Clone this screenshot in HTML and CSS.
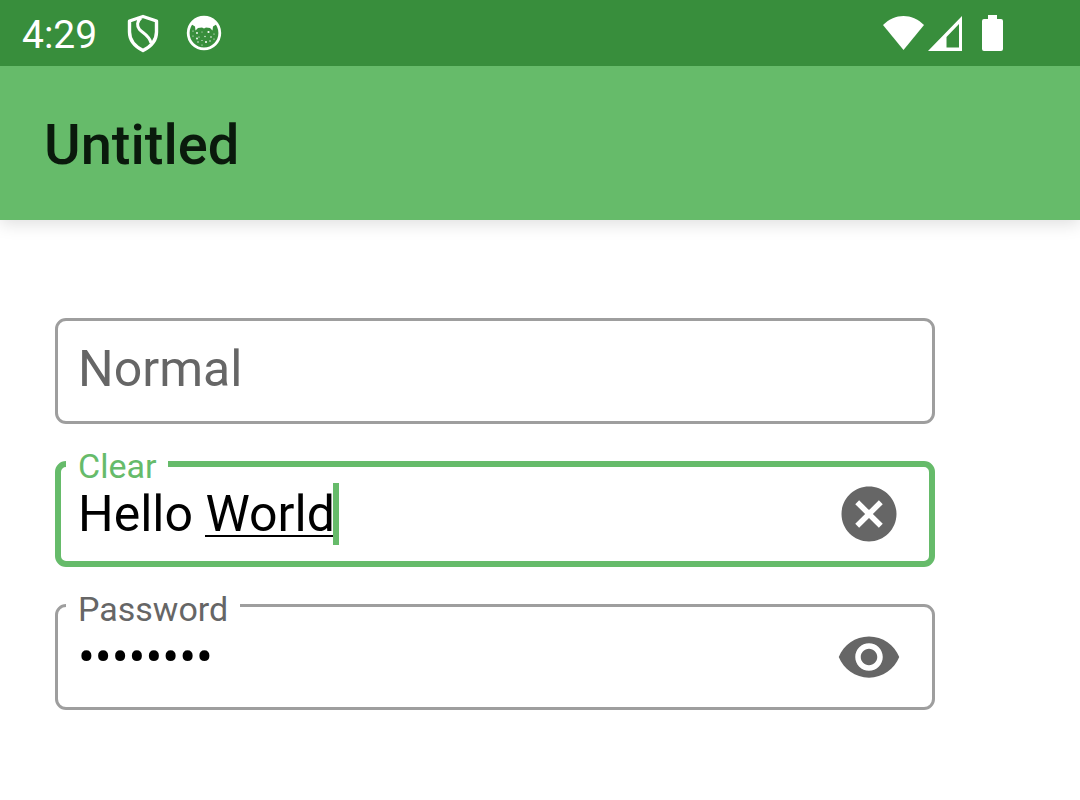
FILE: index.html
```html
<!DOCTYPE html>
<html lang="en">
<head>
  <meta charset="utf-8">
  <meta name="viewport" content="width=device-width, initial-scale=1">
  <title>Untitled</title>
  <link rel="stylesheet" href="styles.css">
</head>
<body>
  <div class="status-bar">
    <span class="time">4:29</span>
    <svg class="shield" width="34" height="40" viewBox="0 0 34 40" fill="none" stroke="#fff" stroke-linejoin="round">
      <path stroke-width="3.400" d="M17 3.500L30.500 8V19C30.500 27 25 33.500 17 37.500C9 33.500 3.500 27 3.500 19V8Z"/>
      <path stroke-width="3" d="M15 5C11 8 10.500 13 13.500 16.500C17 20.500 23 22 25 30"/>
    </svg>
    <svg class="cat" width="36" height="36" viewBox="0 0 36 36">
      <circle cx="18" cy="18" r="15.800" fill="none" stroke="#fff" stroke-width="2.800"/>
      <path fill="#fff" d="M5 9C12 0 24 0 31 9L27 11.500L26.500 15.500L24 13L20 12.500L18 13.500L16 12.500L12 13L9.500 15.500L9 11.500Z"/>
      <g fill="#fff">
        <circle cx="7" cy="16" r=".6"/><circle cx="11" cy="18" r=".9"/><circle cx="16" cy="17" r=".5"/>
        <circle cx="22.500" cy="17" r="1.100"/><circle cx="28" cy="19" r=".6"/><circle cx="7" cy="21" r=".6"/>
        <circle cx="13" cy="22" r=".6"/><circle cx="11" cy="23.500" r=".9"/><circle cx="19" cy="21.500" r=".7"/>
        <circle cx="25" cy="22" r=".8"/><circle cx="12" cy="27" r=".7"/><circle cx="16" cy="25.500" r=".6"/>
        <circle cx="20" cy="27" r="1"/><circle cx="24" cy="26" r=".7"/><circle cx="28" cy="24" r=".6"/>
        <circle cx="16" cy="30" r=".6"/>
      </g>
    </svg>
    <div class="status-right">
      <svg class="wifi" width="41" height="34" viewBox="0 0 41 34" fill="#fff">
        <path d="M20.500 34L0 9C12-3 29-3 41 9Z"/>
      </svg>
      <svg class="signal" width="34" height="35" viewBox="0 0 34 35" fill="#fff" fill-rule="evenodd">
        <path d="M34 0V35H0ZM31 8L18.500 21V31.500H31Z"/>
      </svg>
      <svg class="battery" width="21" height="36" viewBox="0 0 21 36" fill="#fff">
        <path d="M6 0H15V4H19Q21 4 21 6V34Q21 36 19 36H2Q0 36 0 34V6Q0 4 2 4H6Z"/>
      </svg>
    </div>
  </div>

  <header class="app-bar">
    <h1>Untitled</h1>
  </header>

  <form class="fields">
    <div class="field">
      <input type="text" id="normal" name="normal">
      <label for="normal">Normal</label>
    </div>

    <div class="field active">
      <input type="text" id="clear" name="clear" value="Hello World">
      <label class="floating" for="clear">Clear</label>
      <!-- word being typed and cursor -->
      <span class="composing"></span>
      <span class="caret"></span>
      <button type="button" aria-label="Clear text">
        <svg viewBox="0 0 24 24"><path d="M12 2C6.470 2 2 6.470 2 12s4.470 10 10 10 10-4.470 10-10S17.530 2 12 2zm5 13.590L15.590 17 12 13.410 8.410 17 7 15.590 10.590 12 7 8.410 8.410 7 12 10.590 15.590 7 17 8.410 13.410 12 17 15.590z"/></svg>
      </button>
    </div>

    <div class="field">
      <input type="password" id="password" name="password" value="password">
      <label class="floating" for="password">Password</label>
      <button type="button" aria-label="Show password">
        <svg viewBox="0 0 24 24"><path d="M12 4.500C7 4.500 2.730 7.610 1 12c1.730 4.390 6 7.500 11 7.500s9.270-3.110 11-7.500c-1.730-4.390-6-7.500-11-7.500zM12 17c-2.760 0-5-2.240-5-5s2.240-5 5-5 5 2.240 5 5-2.240 5-5 5zm0-8c-1.660 0-3 1.340-3 3s1.340 3 3 3 3-1.340 3-3-1.340-3-3-3z"/></svg>
      </button>
    </div>
  </form>
</body>
</html>
```
FILE: styles.css
```css
* { box-sizing: border-box; }
body { margin: 0; background: #fff; font-family: Roboto, sans-serif; }

.status-bar { position: relative; z-index: 1; display: flex; align-items: center; height: 66px; padding: 0 77px 0 22px; background: #388e3c; color: #fff; }
.status-bar svg { display: block; }
.time { font-size: 39px; line-height: 46px; padding-top: 4px; }
.shield { margin-left: 29px; }
.cat { margin-left: 26px; }
.status-right { display: flex; align-items: center; margin-left: auto; }
.signal { margin-left: 4px; }
.battery { margin-left: 20px; }

.app-bar { display: flex; align-items: center; height: 154px; padding: 4px 44px 0; background: #66bb6a; box-shadow: 0 4px 16px rgba(0, 0, 0, 0.13); }
.app-bar h1 { margin: 0; font-size: 56px; font-weight: 500; line-height: 64px; color: #0a1a0c; }

.fields { display: flex; flex-direction: column; gap: 37px; padding: 98px 145px 0 55px; }
.field { position: relative; }
.field input {
  display: block;
  width: 100%;
  height: 106px;
  padding: 0 120px 0 20px;
  border: 3px solid #9e9e9e;
  border-radius: 11px;
  outline: none;
  background: #fff;
  color: #000;
  font-family: inherit;
  font-size: 50px;
}
.field label { position: absolute; top: 0; left: 23px; font-size: 50px; line-height: 102px; color: #666; }
.field label.floating { top: -14px; left: 11px; padding: 0 12px; background: #fff; font-size: 34px; line-height: 38px; }

.active input { padding: 0 117px 0 17px; border: 6px solid #66bb6a; }
.active label.floating { color: #66bb6a; }
.composing { position: absolute; top: 74px; left: 150px; width: 129px; height: 2px; background: #000; }
.caret { position: absolute; top: 22px; left: 278px; width: 6px; height: 62px; background: #66bb6a; }

.field button { position: absolute; top: 20px; right: 33px; width: 66px; height: 66px; padding: 0; border: none; background: none; cursor: pointer; }
.field button svg { display: block; width: 66px; height: 66px; fill: #666; }
```
